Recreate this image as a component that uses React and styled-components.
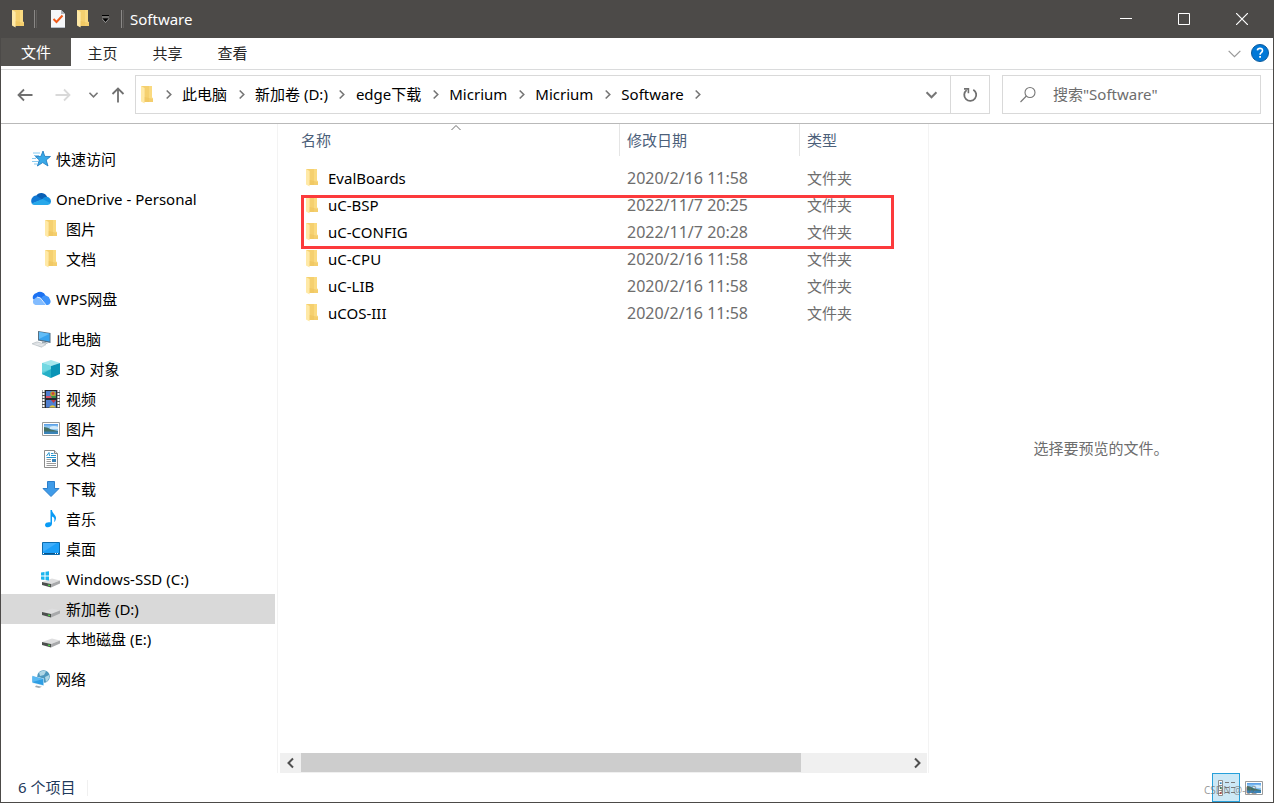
import React from "react";
import styled, { createGlobalStyle } from "styled-components";

const GlobalStyle = createGlobalStyle`
  * {
    box-sizing: border-box;
  }
  body {
    margin: 0;
    font-family: "Noto Sans", "Noto Sans CJK SC", sans-serif;
    font-size: 15px;
    line-height: 20px;
    color: #000;
  }
  button, input {
    font: inherit;
    color: inherit;
    border: none;
    padding: 0;
    background: transparent;
  }
  svg {
    display: block;
    flex: none;
  }
`;

const Window = styled.div`
  display: flex;
  flex-direction: column;
  min-height: 100vh;
  background: #fff;
  border: 1px solid #4c4a48;
  border-top: none;
`;

const TitleBar = styled.header`
  display: flex;
  align-items: center;
  height: 38px;
  padding: 0 2px 0 9px;
  background: #4c4a48;
  color: #fff;
`;

const QuickButton = styled.button`
  display: flex;
  align-items: center;
  justify-content: center;
  width: ${(props) => props.$width || 26}px;
  height: 26px;
`;

const Divider = styled.span`
  width: 3px;
  height: 18px;
  border: 1px solid #8a8886;
  border-width: 0 1px;
  border-right-color: #5f5d5b;
`;

const Title = styled.h1`
  flex: 1;
  margin: 0 0 0 4px;
  font-size: 15px;
  font-weight: normal;
`;

const WindowButton = styled.button`
  display: flex;
  align-items: center;
  justify-content: center;
  width: 58px;
  height: 38px;
`;

const Ribbon = styled.nav`
  display: flex;
  align-items: flex-start;
  height: 32px;
  border-bottom: 1px solid #dadbdc;
  color: #262626;
`;

const FileTab = styled.button`
  width: 70px;
  height: 28px;
  background: #555350;
  color: #fff;
`;

const Tab = styled.button`
  width: 65px;
  height: 30px;
  padding-right: 2px;
`;

const RibbonTools = styled.div`
  display: flex;
  align-items: center;
  gap: 10px;
  height: 30px;
  margin-left: auto;
  padding-right: 4px;
`;

const NavBar = styled.div`
  display: flex;
  align-items: center;
  height: 54px;
  padding-right: 12px;
  padding-bottom: 4px;
  border-bottom: 1px solid #b9b9b9;
`;

const NavButtons = styled.div`
  display: flex;
  align-items: center;
  width: 134px;
  padding-left: 8px;
`;

const NavButton = styled.button`
  display: flex;
  align-items: center;
  justify-content: center;
  width: ${(props) => props.$width}px;
  height: 30px;
`;

const AddressBox = styled.div`
  display: flex;
  align-items: center;
  flex: 1;
  height: 39px;
  padding-left: 4px;
  border: 1px solid #d9d9d9;
`;

const Crumb = styled.button`
  height: 30px;
  padding-bottom: 2px;
  white-space: nowrap;
`;

const CrumbArrow = styled.span`
  display: flex;
  align-items: center;
  justify-content: center;
  width: 28px;
`;

const AddressTools = styled.div`
  display: flex;
  align-items: center;
  height: 100%;
  margin-left: auto;
`;

const RefreshButton = styled.button`
  display: flex;
  align-items: center;
  justify-content: center;
  width: 39px;
  height: 100%;
  border-left: 1px solid #d9d9d9;
`;

const SearchBox = styled.label`
  display: flex;
  align-items: center;
  gap: 16px;
  width: 259px;
  height: 39px;
  margin-left: 12px;
  padding-left: 16px;
  border: 1px solid #d9d9d9;
`;

const SearchInput = styled.input`
  flex: 1;
  min-width: 0;
  height: 30px;
  padding-bottom: 2px;
  outline: none;
  &::placeholder {
    color: #6d6d6d;
    opacity: 1;
  }
`;

const Body = styled.div`
  display: flex;
  flex: 1;
`;

const Sidebar = styled.nav`
  width: 277px;
  padding: 20px 2px 0 0;
  border-right: 1px solid #f3f3f3;
`;

const Group = styled.div`
  margin-bottom: 10px;
`;

const TreeItem = styled.a`
  display: flex;
  align-items: center;
  gap: 4px;
  height: 30px;
  padding-left: ${(props) => (props.$child ? 39 : 29)}px;
  background: ${(props) => (props.$selected ? "#d9d9d9" : "transparent")};
  color: #000;
  text-decoration: none;
  white-space: nowrap;
`;

const Files = styled.main`
  display: flex;
  flex-direction: column;
  justify-content: space-between;
  flex: 650 1 0;
  min-width: 0;
  padding-left: 2px;
  border-right: 1px solid #f3f3f3;
`;

const TableArea = styled.div`
  position: relative;
  overflow: hidden;
`;

const Table = styled.table`
  width: 100%;
  table-layout: fixed;
  border-collapse: collapse;
  text-align: left;

  thead tr {
    height: 40px;
    vertical-align: top;
  }
  td {
    height: 27px;
    padding: 0 0 0 8px;
    color: #6d6d6d;
  }
  td:first-child {
    padding-left: 25px;
    color: #000;
  }
`;

const Th = styled.th`
  width: ${(props) => (props.$width ? props.$width + "px" : "auto")};
  padding: 0;
  font-weight: normal;
  color: #4c607a;
`;

const HeadCell = styled.div`
  display: flex;
  align-items: center;
  height: 32px;
  padding-left: ${(props) => (props.$first ? 21 : 7)}px;
  border-left: ${(props) => (props.$first ? "none" : "1px solid #e5e5e5")};
`;

const SortMark = styled.span`
  position: absolute;
  top: -1px;
  left: 171px;
`;

const FileName = styled.div`
  display: flex;
  align-items: center;
  gap: 9px;
`;

const FileDate = styled.span`
  font-size: 16px;
`;

const RedFrame = styled.div`
  position: absolute;
  top: 71px;
  left: 21px;
  width: 593px;
  height: 54px;
  border: 3px solid #fc3a3c;
`;

const ScrollBar = styled.div`
  display: flex;
  height: 20px;
  margin-right: 1px;
  background: #f0f0f0;
`;

const ScrollButton = styled.button`
  display: flex;
  align-items: center;
  justify-content: center;
  width: 21px;
  height: 19px;
`;

const ScrollTrack = styled.div`
  display: flex;
  flex: 1;
`;

const ScrollThumb = styled.div`
  flex: 500;
  height: 19px;
  background: #cdcdcd;
`;

const ScrollRest = styled.div`
  flex: 105;
`;

const Preview = styled.aside`
  display: flex;
  align-items: center;
  justify-content: center;
  flex: 345 1 0;
  min-width: 0;
  padding-bottom: 2px;
  color: #6d6d6d;
`;

const StatusBar = styled.footer`
  display: flex;
  align-items: center;
  height: 29px;
  padding-left: 17px;
  color: #1e395b;
`;

const Count = styled.span`
  padding: 0 12px 2px 0;
  border-right: 1px solid #f0f0f0;
  line-height: 14px;
`;

const Views = styled.div`
  position: relative;
  display: flex;
  margin-left: auto;
  padding-right: 5px;
`;

const ViewButton = styled.button`
  display: flex;
  align-items: center;
  justify-content: center;
  width: 28px;
  height: 29px;
  border: 1px solid ${(props) => (props.$active ? "#26a0da" : "transparent")};
  background: ${(props) => (props.$active ? "#cce8f6" : "transparent")};
`;

const Watermark = styled.span`
  position: absolute;
  top: 7px;
  right: 16px;
  font-size: 10px;
  color: rgba(110, 110, 110, 0.7);
  white-space: nowrap;
  pointer-events: none;
`;

const FolderIcon = ({ width = 14 }) => (
  <svg width={width} height="18" viewBox="0 0 14 18">
    <path d="M1 0H12V11.5L13 12.5V16H4Z" fill="#f5d06f" />
    <path d="M9 0H12V11.5L13 12.5V16H9Z" fill="#fada80" />
    <path d="M1 0L4.6 2V17.6L1 15.6Z" fill="#ffe9a6" />
    <path d="M4.6 11L13 13V16H4.6Z" fill="#eec25a" opacity=".5" />
  </svg>
);

const CheckDocIcon = () => (
  <svg width="14" height="18" viewBox="0 0 14 18">
    <path d="M0 0H10L14 4V18H0Z" fill="#f6f7f9" />
    <path d="M10 0V4H14Z" fill="#aeb4bc" />
    <path d="M0 17.5H14" stroke="#b6bcc6" />
    <path d="M2.5 9L5.5 12L11.5 5.5" fill="none" stroke="#f05a1a" strokeWidth="2" />
  </svg>
);

const Chevron = ({ dir = "right", size = 8, color = "#767676", stroke = 1.6 }) => {
  const turn = { right: 0, down: 90, left: 180, up: 270 }[dir];
  return (
    <svg width={size} height={size} viewBox="0 0 10 10" overflow="visible">
      <path
        d="M3 0.5L7.5 5L3 9.5"
        fill="none"
        stroke={color}
        strokeWidth={(stroke * 10) / size}
        transform={`rotate(${turn} 5 5)`}
      />
    </svg>
  );
};

const Arrow = ({ turn = 0, color = "#707070" }) => (
  <svg width="16" height="16" viewBox="0 0 16 16">
    <path
      d="M15.5 8H1.5M7 2.5L1.5 8L7 13.5"
      fill="none"
      stroke={color}
      strokeWidth="1.8"
      transform={`rotate(${turn} 8 8)`}
    />
  </svg>
);

const StarIcon = () => (
  <svg width="22" height="20" viewBox="0 0 22 20">
    <path d="M13 2L14.8 7.4L20.5 7.5L16.2 11L18 17L12.7 13.6L7.4 17L9.3 11L5.4 7.6L10.9 7.4Z" fill="#39a9e8" stroke="#1876bd" strokeWidth=".8" />
    <path d="M3 4H10M4 6.5H9M2 9.5H6M2 12.5H8M4 15H7" stroke="#7cc4ee" strokeWidth=".9" />
  </svg>
);

const OneDriveIcon = () => (
  <svg width="22" height="20" viewBox="0 0 22 20">
    <path d="M6 7A6.2 6.2 0 0 1 17.2 8L13 13L5 9Z" fill="#0a5fb4" />
    <path d="M6 6.5A5.5 5.5 0 0 0 2 14.8L12.5 10.5Z" fill="#0f78d4" />
    <path d="M12 10.5A5 5 0 0 1 17 7.8A4.4 4.4 0 0 1 20.5 14L17 15Z" fill="#1490df" />
    <path d="M1.5 14.5L12.5 10L20.7 14.3A4 4 0 0 1 17.5 16H5A4.3 4.3 0 0 1 1.5 14.5Z" fill="#28a8ea" />
  </svg>
);

const WpsIcon = () => (
  <svg width="22" height="20" viewBox="0 0 22 20">
    <path d="M3 10A4.6 4.6 0 0 1 6.5 4A5.8 5.8 0 0 1 15.5 6.5L17 16H12Z" fill="#1c72f2" />
    <path d="M5 9.4A4 4 0 0 1 11.5 10L16 16H5.5A3.5 3.5 0 0 1 5 9.4Z" fill="#82bcff" />
    <path d="M11.5 8.5A4.8 4.8 0 0 1 20 10.5A3.6 3.6 0 0 1 17.5 16H15.5Z" fill="#3f94fb" />
    <path d="M7 8L10.5 9L16 16" fill="none" stroke="#fff" strokeWidth=".8" />
  </svg>
);

const ComputerIcon = () => (
  <svg width="22" height="20" viewBox="0 0 22 20">
    <path d="M8 2L20.5 4V14L8 11.5Z" fill="#556f83" />
    <path d="M9 3L19.6 4.8V12.6L9 10.6Z" fill="#38a3ee" />
    <path d="M9 3L19.6 4.8L9 10Z" fill="#62bdf7" />
    <path d="M12 12.3L16 13.2L18 15L12 14Z" fill="#9ca9b3" />
    <path d="M2 14.8L7 12.8L16 15.6L11.5 18.2Z" fill="#d2d7db" stroke="#b2babf" strokeWidth=".6" />
    <path d="M4.5 14.8L13 17M6.5 13.9L14.5 16" stroke="#f5f5f5" strokeWidth=".6" />
  </svg>
);

const CubeIcon = () => (
  <svg width="22" height="20" viewBox="0 0 22 20">
    <path d="M11 1L20 4L11 7L2 4Z" fill="#a5e7ed" />
    <path d="M2 4L11 7V19L2 15Z" fill="#56cbd9" />
    <path d="M20 4L11 7V19L20 15Z" fill="#0a94b6" />
    <path d="M2 15L11 10V19Z" fill="#25afc6" />
    <path d="M2 4L11 7V10L2 13Z" fill="#72d8e2" />
  </svg>
);

const VideoIcon = () => (
  <svg width="22" height="20" viewBox="0 0 22 20">
    <path d="M2 1H20V19H2Z" fill="#55595c" />
    <path d="M3.5 1V19M18.5 1V19" stroke="#fff" strokeWidth="2" strokeDasharray="2 1" />
    <path d="M5 1H17V19H5Z" fill="#26282c" />
    <path d="M6 2H16V9H6ZM6 11H16V18.5H6Z" fill="#4f7fd0" />
    <path d="M6 7H11L12 9H6Z" fill="#d8506a" />
    <circle cx="13" cy="5" r="2.8" fill="#b5a42d" />
    <circle cx="13" cy="4.5" r="1.3" fill="#d7383c" />
    <path d="M11 7H16V9H12Z" fill="#398f4b" />
    <path d="M11 11H16L13.5 14Z" fill="#bd3b45" />
    <path d="M9 18.5Q12.5 14 16 18.5Z" fill="#e4c839" />
  </svg>
);

const PictureIcon = () => (
  <svg width="22" height="20" viewBox="0 0 22 20">
    <path d="M2.5 3.5H19.5V16.5H2.5Z" fill="#fff" stroke="#9b9b9b" />
    <path d="M4 5H18V15H4Z" fill="#8ec6f2" />
    <path d="M4 5H18V6.5H4Z" fill="#5ea2e8" />
    <path d="M10 8Q14 6 18 8V10H10Z" fill="#d3eafa" />
    <path d="M4 8Q8 8 11 10.5L18 12V13H4Z" fill="#446f63" />
    <path d="M4 12.5H18V15H4Z" fill="#3a83b7" />
  </svg>
);

const DocumentIcon = () => (
  <svg width="22" height="20" viewBox="0 0 22 20">
    <path d="M4.5 1.5H14.5L17.5 4.5V18.5H4.5Z" fill="#fff" stroke="#8c8c8c" />
    <path d="M14.5 1.5V4.5H17.5" fill="#e4e4e4" stroke="#8c8c8c" />
    <path d="M6.5 7L9 3.5L9.5 7M11 4.5H13.5M11 6.5H16M6.5 8.5H16" fill="none" stroke="#2795cf" />
    <path d="M6.5 10.5H11M6.5 12.5H11M6.5 14.5H16M6.5 16.5H16" stroke="#9a9a9a" />
    <path d="M12 10H16V13H12Z" fill="#3a83b7" />
  </svg>
);

const DownloadIcon = () => (
  <svg width="22" height="20" viewBox="0 0 22 20">
    <path d="M7.5 2.5H14.5V9.5H19L11 17.5L3 9.5H7.5Z" fill="#3f9be8" stroke="#2b7ecb" />
  </svg>
);

const MusicIcon = () => (
  <svg width="22" height="20" viewBox="0 0 22 20">
    <path d="M10.5 1H12C12 4.5 16.5 6 16 9.5C15.8 11 15 12.5 14 13C15 10 14.5 8.5 12 7.5V14.5C12 19 5 19.5 5 16C5 13.5 8.5 13 10.5 13.5Z" fill="#0a9bf5" />
  </svg>
);

const DesktopIcon = () => (
  <svg width="22" height="20" viewBox="0 0 22 20">
    <path d="M2.5 3.5H19.5V15.5H2.5Z" fill="#1c9ff8" stroke="#0c6cae" />
    <path d="M3 13V4H17Z" fill="#40aefb" />
    <path d="M3 14.5H19" stroke="#0b5488" />
    <path d="M3 14.5H4M15 14.5H16M17 14.5H18" stroke="#fff" />
  </svg>
);

const DriveIcon = ({ windows }) => (
  <svg width="22" height="20" viewBox="0 0 22 20">
    <path d="M2 13L12 9.5L20 11.5L11 15Z" fill="#dededf" />
    <path d="M2 13L11 15V18.5L2 16Z" fill="#4c4f4e" />
    <path d="M11 15L20 11.5V14.5L11 18.5Z" fill="#a8a9ab" />
    <path d="M8 16L10 16.6" stroke="#4fe04a" strokeWidth="1.3" />
    {windows && (
      <path d="M1 3.5L4.5 3V6.5H1ZM5.5 2.8L9 2.3V6.5H5.5ZM1 7.5H4.5V11L1 10.5ZM5.5 7.5H9V11.5L5.5 11Z" fill="#1bb5ee" />
    )}
  </svg>
);

const NetworkIcon = () => (
  <svg width="22" height="20" viewBox="0 0 22 20">
    <circle cx="13.5" cy="7.5" r="6.3" fill="#4e97bd" />
    <path d="M9 3.5Q13 .5 16 2.5L14 6L10 7ZM15 8L19 6Q20 10 16 13Z" fill="#b0d7e6" />
    <path d="M2 6.5L14 9.5V17L2 14Z" fill="#d6edf8" />
    <path d="M2.5 7.2L13.4 10V16.2L2.5 13.5Z" fill="#2e9ee4" />
    <path d="M2.5 7.2L13.4 10L2.5 13Z" fill="#5ab9f2" />
    <path d="M6 16.5L12 17.8L9 19L5 18Z" fill="#a1abb1" />
  </svg>
);

const SearchIcon = () => (
  <svg width="18" height="18" viewBox="0 0 18 18">
    <circle cx="11" cy="6.5" r="5" fill="none" stroke="#767676" strokeWidth="1.1" />
    <path d="M7.4 10L1.5 16" stroke="#767676" strokeWidth="1.1" />
  </svg>
);

const RefreshIcon = () => (
  <svg width="16" height="16" viewBox="0 0 16 16">
    <path d="M11.3 2.7A6 6 0 1 1 4.6 3.1" fill="none" stroke="#707070" strokeWidth="1.8" />
    <path d="M2 1.9H6.4V6.2" fill="none" stroke="#707070" strokeWidth="1.6" />
  </svg>
);

const HelpIcon = () => (
  <svg width="18" height="18" viewBox="0 0 18 18">
    <circle cx="9" cy="9" r="8.5" fill="#0078d7" stroke="#0b5a9c" />
    <path d="M6.4 6.4Q6.6 4.4 9 4.4Q11.6 4.4 11.5 6.6Q11.4 7.8 10.2 8.6Q9.1 9.4 9.1 10.8" fill="none" stroke="#fff" strokeWidth="1.6" />
    <path d="M8.2 12H10V13.8H8.2Z" fill="#fff" />
  </svg>
);

const DetailsIcon = () => (
  <svg width="20" height="18" viewBox="0 0 20 18">
    <path d="M2.5 1.5H6.5V16.5H2.5Z" fill="#fff" stroke="#8d8d8d" />
    <path d="M2.5 6.5H6.5M2.5 11.5H6.5" stroke="#8d8d8d" />
    <path d="M3.8 3.3H5.6V5H3.8Z" fill="#2f83bd" />
    <path d="M3.8 8H5.6V10H3.8Z" fill="#3c8d52" />
    <path d="M3.8 13H5.6V15H3.8Z" fill="#d03a30" />
    <path d="M9 3.5H13M15 3.5H19M9 8.5H13M15 8.5H19M9 13.5H13M15 13.5H19" stroke="#7a7a7a" />
  </svg>
);

const tree = [
  [{ label: "快速访问", icon: <StarIcon /> }],
  [
    { label: "OneDrive - Personal", icon: <OneDriveIcon /> },
    { label: "图片", icon: <FolderIcon width={20} />, child: true },
    { label: "文档", icon: <FolderIcon width={20} />, child: true },
  ],
  [{ label: "WPS网盘", icon: <WpsIcon /> }],
  [
    { label: "此电脑", icon: <ComputerIcon /> },
    { label: "3D 对象", icon: <CubeIcon />, child: true },
    { label: "视频", icon: <VideoIcon />, child: true },
    { label: "图片", icon: <PictureIcon />, child: true },
    { label: "文档", icon: <DocumentIcon />, child: true },
    { label: "下载", icon: <DownloadIcon />, child: true },
    { label: "音乐", icon: <MusicIcon />, child: true },
    { label: "桌面", icon: <DesktopIcon />, child: true },
    { label: "Windows-SSD (C:)", icon: <DriveIcon windows />, child: true },
    { label: "新加卷 (D:)", icon: <DriveIcon />, child: true, selected: true },
    { label: "本地磁盘 (E:)", icon: <DriveIcon />, child: true },
  ],
  [{ label: "网络", icon: <NetworkIcon /> }],
];

const TreeIcon = styled.span`
  display: flex;
  justify-content: center;
  width: 22px;
`;

const crumbs = ["此电脑", "新加卷 (D:)", "edge下载", "Micrium", "Micrium", "Software"];

const files = [
  { name: "EvalBoards", date: "2020/2/16 11:58" },
  { name: "uC-BSP", date: "2022/11/7 20:25" },
  { name: "uC-CONFIG", date: "2022/11/7 20:28" },
  { name: "uC-CPU", date: "2020/2/16 11:58" },
  { name: "uC-LIB", date: "2020/2/16 11:58" },
  { name: "uCOS-III", date: "2020/2/16 11:58" },
];

const App = () => {
  return (
    <Window>
      <GlobalStyle />
      <TitleBar>
        <QuickButton $width={16} aria-label="窗口菜单"><FolderIcon /></QuickButton>
        <QuickButton $width={18} as="span"><Divider /></QuickButton>
        <QuickButton $width={28} aria-label="属性"><CheckDocIcon /></QuickButton>
        <QuickButton $width={22} aria-label="新建文件夹"><FolderIcon /></QuickButton>
        <QuickButton $width={24} aria-label="自定义快速访问工具栏">
          <svg width="8" height="8" viewBox="0 0 8 8">
            <path d="M0 .5H7M1 4H6L3.5 6.5Z" fill="#000" stroke="#000" />
            <path d="M0 2H7M0 3.5L3.5 7.5L7 3.5" fill="none" stroke="#b8b8b8" strokeWidth=".7" />
          </svg>
        </QuickButton>
        <QuickButton $width={8} as="span"><Divider /></QuickButton>
        <Title>Software</Title>
        <WindowButton aria-label="最小化">
          <svg width="12" height="12"><path d="M0 5.5H12" stroke="#fff" /></svg>
        </WindowButton>
        <WindowButton aria-label="最大化">
          <svg width="12" height="12"><path d="M.5 .5H11.5V11.5H.5Z" fill="none" stroke="#fff" /></svg>
        </WindowButton>
        <WindowButton aria-label="关闭">
          <svg width="12" height="12"><path d="M0 0L12 12M12 0L0 12" stroke="#fff" strokeWidth="1.2" /></svg>
        </WindowButton>
      </TitleBar>

      <Ribbon>
        <FileTab>文件</FileTab>
        <Tab>主页</Tab>
        <Tab>共享</Tab>
        <Tab>查看</Tab>
        <RibbonTools>
          <button aria-label="展开功能区"><Chevron dir="down" size={13} color="#999" stroke={1.2} /></button>
          <button aria-label="帮助"><HelpIcon /></button>
        </RibbonTools>
      </Ribbon>

      <NavBar>
        <NavButtons>
          <NavButton $width={32} aria-label="返回"><Arrow /></NavButton>
          <NavButton $width={44} aria-label="前进"><Arrow turn={180} color="#d9d9d9" /></NavButton>
          <NavButton $width={16} aria-label="最近浏览的位置"><Chevron dir="down" size={9} /></NavButton>
          <NavButton $width={34} aria-label="上移"><Arrow turn={90} /></NavButton>
        </NavButtons>
        <AddressBox>
          <FolderIcon />
          {crumbs.map((crumb, i) => (
            <React.Fragment key={i}>
              <CrumbArrow><Chevron size={9} /></CrumbArrow>
              <Crumb>{crumb}</Crumb>
            </React.Fragment>
          ))}
          <CrumbArrow><Chevron size={9} /></CrumbArrow>
          <AddressTools>
            <NavButton $width={38} aria-label="以前的位置"><Chevron dir="down" size={11} stroke={2} /></NavButton>
            <RefreshButton aria-label="刷新"><RefreshIcon /></RefreshButton>
          </AddressTools>
        </AddressBox>
        <SearchBox>
          <SearchIcon />
          <SearchInput type="text" aria-label="搜索" placeholder={'搜索"Software"'} />
        </SearchBox>
      </NavBar>

      <Body>
        <Sidebar>
          {tree.map((group, i) => (
            <Group key={i}>
              {group.map((item) => (
                <TreeItem key={item.label} href="#" $child={item.child} $selected={item.selected}>
                  <TreeIcon>{item.icon}</TreeIcon>
                  <span>{item.label}</span>
                </TreeItem>
              ))}
            </Group>
          ))}
        </Sidebar>

        <Files>
          <TableArea>
            <Table>
              <thead>
                <tr>
                  <Th $width={339}><HeadCell $first>名称</HeadCell></Th>
                  <Th $width={180}><HeadCell>修改日期</HeadCell></Th>
                  <Th><HeadCell>类型</HeadCell></Th>
                </tr>
              </thead>
              <tbody>
                {files.map((file) => (
                  <tr key={file.name}>
                    <td><FileName><FolderIcon /><span>{file.name}</span></FileName></td>
                    <td><FileDate>{file.date}</FileDate></td>
                    <td>文件夹</td>
                  </tr>
                ))}
              </tbody>
            </Table>
            <SortMark><Chevron dir="up" size={10} color="#6d6d6d" stroke={1} /></SortMark>
            <RedFrame />
          </TableArea>
          <ScrollBar>
            <ScrollButton aria-label="向左滚动"><Chevron dir="left" size={10} color="#505050" stroke={2} /></ScrollButton>
            <ScrollTrack>
              <ScrollThumb />
              <ScrollRest />
            </ScrollTrack>
            <ScrollButton aria-label="向右滚动"><Chevron size={10} color="#505050" stroke={2} /></ScrollButton>
          </ScrollBar>
        </Files>

        <Preview>选择要预览的文件。</Preview>
      </Body>

      <StatusBar>
        <Count>6 个项目</Count>
        <Views>
          <ViewButton $active aria-label="详细信息"><DetailsIcon /></ViewButton>
          <ViewButton aria-label="大缩略图"><PictureIcon /></ViewButton>
          <Watermark>CSDN @-02</Watermark>
        </Views>
      </StatusBar>
    </Window>
  );
};

export default App;
